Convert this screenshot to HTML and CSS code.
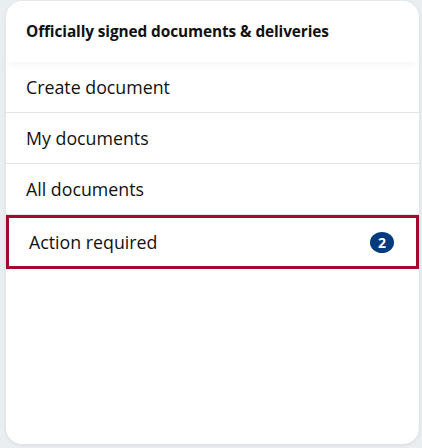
FILE: index.html
```html
<!DOCTYPE html>
<html lang="en">
<head>
  <meta charset="UTF-8">
  <meta name="viewport" content="width=device-width, initial-scale=1.0">
  <title>Documents</title>
  <link rel="stylesheet" href="styles.css">
</head>
<body>
  <div class="card">
    <div class="card-header">Officially signed documents &amp; deliveries</div>
    <ul class="menu">
      <li class="menu-item">Create document</li>
      <li class="menu-item">My documents</li>
      <li class="menu-item">All documents</li>
      <li class="menu-item active">
        <span>Action required</span>
        <span class="badge">2</span>
      </li>
    </ul>
  </div>
</body>
</html>
```

FILE: styles.css
```css
body {
  margin: 0;
  padding: 1px 3px 4px 6px;
  background-color: #e9eef1;
  font-family: "Open Sans", Arial, sans-serif;
  color: #111;
}
.card {
  width: 413px;
  height: 443px;
  background: #fff;
  border-radius: 16px;
  box-shadow: 0 1px 4px rgba(0, 0, 0, 0.08);
  overflow: hidden;
}
.card-header {
  height: 61px;
  padding: 0 20px;
  display: flex;
  align-items: center;
  font-size: 15.4px;
  font-weight: 700;
  letter-spacing: -0.1px;
  position: relative;
  box-shadow: 0 6px 8px -4px rgba(0, 0, 0, 0.05);
}
.menu {
  list-style: none;
  margin: 0;
  padding: 0;
}
.menu-item {
  height: 50px;
  padding: 0 20px;
  display: flex;
  align-items: center;
  justify-content: space-between;
  font-size: 17.8px;
  border-bottom: 1px solid #e3e5e8;
}
.menu-item.active {
  height: 48px;
  border: 3px solid #a10b30;
  padding: 0 22px 0 20px;
}
.badge {
  background: #003b7e;
  color: #fff;
  font-size: 14px;
  font-weight: 700;
  width: 24px;
  height: 21px;
  border-radius: 50%;
  display: flex;
  align-items: center;
  justify-content: center;
}
```
